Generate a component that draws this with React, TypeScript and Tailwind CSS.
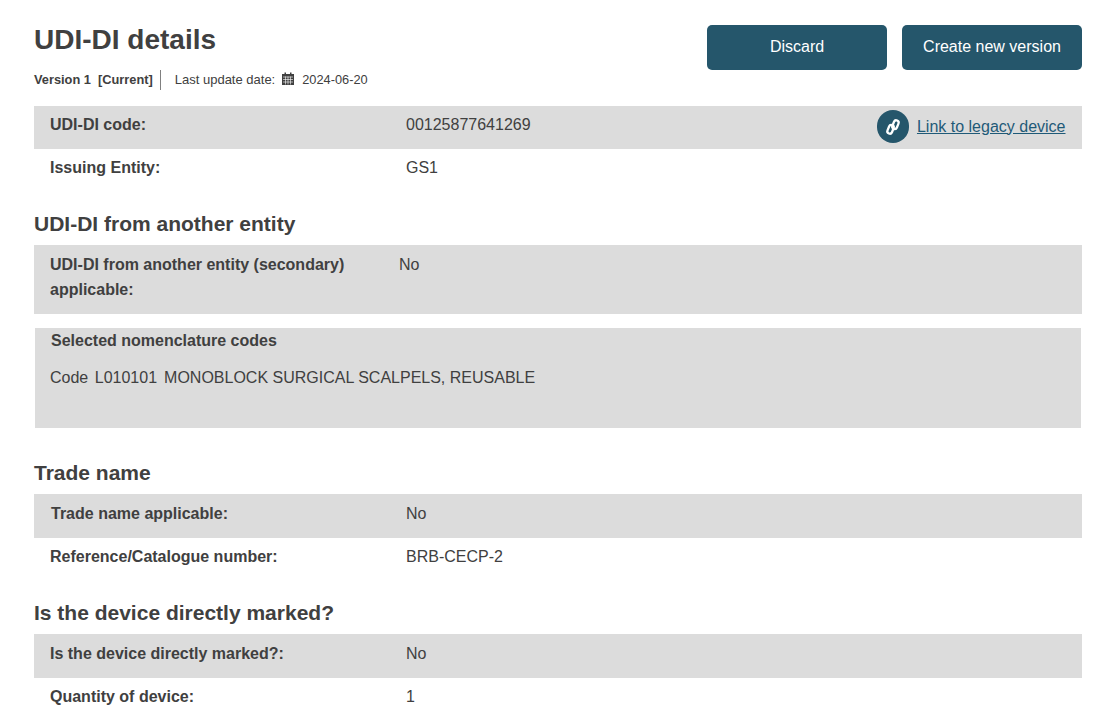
function Row({ label, value, grey, tall, labelClass = "w-[372px] pl-4", extra }: { label: string; value: string; grey?: boolean; tall?: boolean; labelClass?: string; extra?: React.ReactNode }) {
  return (
    <div className={`flex items-start leading-[20px] ${tall ? "h-[44px] pt-[10px]" : "h-[43px] pt-[9px]"} ${grey ? "bg-[#dcdcdc]" : ""}`}>
      <div className={`font-bold shrink-0 ${labelClass}`}>{label}</div>
      <div className="flex-1">{value}</div>
      {extra}
    </div>
  );
}

function Heading({ children, className = "" }: { children: React.ReactNode; className?: string }) {
  return <h2 className={`text-[21px] leading-[24px] font-bold ${className}`}>{children}</h2>;
}

function CalendarIcon() {
  return (
    <svg viewBox="0 0 12 13" className="ml-[7px] -mt-[3px] w-[12px] h-[13px]" fill="currentColor">
      <path d="M0 2h2.5V0.5h1.5V2h4V0.5h1.5V2H12v11H0z" />
      <path d="M1 5h10M1 7.5h10M1 10h10M3.5 4.5v8M6 4.5v8M8.5 4.5v8" stroke="#fff" strokeWidth="0.6" fill="none" />
    </svg>
  );
}

function ChainIcon() {
  return (
    <svg viewBox="0 0 18 18" className="w-[18px] h-[18px]" fill="none" stroke="#fff" strokeWidth="2.3">
      <g transform="rotate(-68 9 9)">
        <rect x="1.4" y="5.2" width="9" height="4.8" rx="2.4" />
        <rect x="7.6" y="8" width="9" height="4.8" rx="2.4" />
      </g>
    </svg>
  );
}

export default function App() {
  return (
    <div className="w-[1104px] h-[727px] overflow-hidden bg-white text-[16px] text-[#404040] pl-[34px] pr-[22px] font-['Liberation_Sans',Arial,sans-serif]">
      <div className="flex justify-between h-[106px]">
        <div>
          <h1 className="text-[28px] leading-[32px] font-bold mt-[24px]">UDI-DI details</h1>
          <div className="flex items-center mt-[14px] text-[12.8px] leading-[20px]">
            <span className="font-bold whitespace-pre">Version 1  [Current]</span>
            <span className="w-px h-[20px] bg-[#808080] mx-[7px]" />
            <span className="ml-[7px] text-[13px]">Last update date:</span>
            <CalendarIcon />
            <span className="ml-[8px]">2024-06-20</span>
          </div>
        </div>
        <div className="flex gap-[15px] mt-[25px]">
          <button className="w-[180px] h-[45px] pb-[2px] rounded-[5px] bg-[#25566b] text-white">Discard</button>
          <button className="w-[180px] h-[45px] pb-[2px] rounded-[5px] bg-[#25566b] text-white">Create new version</button>
        </div>
      </div>

      <Row
        grey
        label="UDI-DI code:"
        value="00125877641269"
        extra={
          <a className="flex items-center gap-2 mr-[16.5px] -mt-[5px] h-[33px] text-[#1f5a78] underline">
            <span className="w-[32px] h-[33px] rounded-full bg-[#25566b] flex items-center justify-center">
              <ChainIcon />
            </span>
            Link to legacy device
          </a>
        }
      />
      <Row label="Issuing Entity:" value="GS1" />

      <Heading className="mt-[20px] mb-[9px]">UDI-DI from another entity</Heading>
      <div className="flex h-[69px] pt-[7px] bg-[#dcdcdc] leading-[25px]">
        <div className="w-[365px] pl-4 pr-[24px] font-bold">UDI-DI from another entity (secondary) applicable:</div>
        <div className="mt-[3px] leading-[20px]">No</div>
      </div>

      <div className="mt-[14px] mx-px h-[100px] bg-[#dcdcdc] px-[15px] pt-[3px] leading-[20px]">
        <div className="font-bold ml-px">Selected nomenclature codes</div>
        <div className="mt-[17px] flex">
          <span>Code</span>
          <span className="ml-[6.5px]">L010101</span>
          <span className="ml-[7px]">MONOBLOCK SURGICAL SCALPELS, REUSABLE</span>
        </div>
      </div>

      <Heading className="mt-[33px] mb-[9px]">Trade name</Heading>
      <Row grey tall label="Trade name applicable:" value="No" labelClass="w-[372px] pl-[17px]" />
      <Row label="Reference/Catalogue number:" value="BRB-CECP-2" />

      <Heading className="mt-[20px] mb-[9px]">Is the device directly marked?</Heading>
      <Row grey tall label="Is the device directly marked?:" value="No" />
      <Row label="Quantity of device:" value="1" />
    </div>
  );
}
